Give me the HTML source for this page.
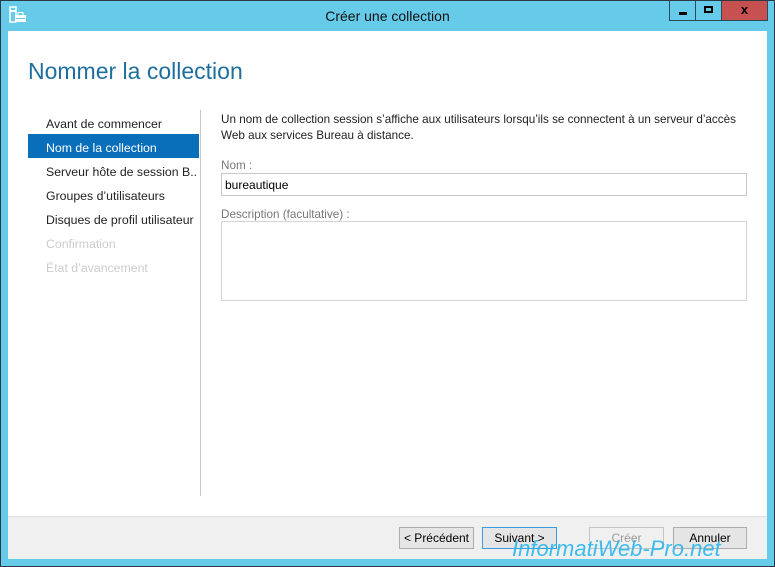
<!DOCTYPE html>
<html><head><style>
*{margin:0;padding:0;box-sizing:border-box}
body{width:775px;height:567px;background:#66cbe9;font-family:"Liberation Sans",sans-serif;position:relative;overflow:hidden;}
.t{position:absolute;white-space:nowrap}
#content{position:absolute;left:8px;top:31px;width:759px;height:528px;background:#fff}
#bottom{position:absolute;left:8px;top:516px;width:759px;height:43px;background:#f0f0f0;border-top:1px solid #dfdfdf}
.btn{position:absolute;top:527px;height:22px;border:1px solid #adadad;background:#e5e5e5;font-size:12px;text-align:center;line-height:21px;color:#000}
.nav{position:absolute;left:46px;font-size:12.3px;color:#222}
</style></head><body>
<div class="t" style="left:0;top:0;width:775px;height:567px;border:1px solid #2a3a44;z-index:5"></div>
<svg class="t" style="left:9px;top:6px" width="18" height="18" viewBox="0 0 18 18"><rect x="1" y="1" width="6" height="15" fill="none" stroke="#fff" stroke-width="1.5"/><rect x="1" y="4" width="6" height="2" fill="#fff"/><rect x="6" y="9" width="11" height="7" fill="#fff"/><rect x="9" y="6.5" width="5" height="3" fill="none" stroke="#fff"/><rect x="7" y="12" width="9" height="1" fill="#66cbe9"/></svg>
<div class="t" style="left:0;width:775px;top:8px;text-align:center;font-size:14px;color:#111">Créer une collection</div>
<div class="t" style="left:669px;top:0;width:27px;height:21px;border:1px solid #2a4a5a;border-top:none"><div style="position:absolute;left:9px;top:12px;width:8px;height:3px;background:#000"></div></div>
<div class="t" style="left:696px;top:0;width:26px;height:21px;border:1px solid #2a4a5a;border-top:none;border-left:none"><div style="position:absolute;left:8px;top:6px;width:9px;height:7px;border:2px solid #000"></div></div>
<div class="t" style="left:722px;top:0;width:46px;height:21px;background:#c75050;border:1px solid #2a4a5a;border-top:none;border-left:none;text-align:center;font-weight:bold;font-size:13px;line-height:20px">x</div>
<div id="content"></div>
<div class="t" style="left:28px;top:58px;font-size:23px;color:#1f6f9e">Nommer la collection</div>
<div class="t" style="left:28px;top:134px;width:171px;height:24px;background:#0a6fba"></div>
<div class="nav t" style="top:117px">Avant de commencer</div>
<div class="nav t" style="top:141px;color:#fff">Nom de la collection</div>
<div class="nav t" style="top:165px;width:152px;overflow:hidden">Serveur hôte de session B...</div>
<div class="nav t" style="top:189px">Groupes d’utilisateurs</div>
<div class="nav t" style="top:213px">Disques de profil utilisateur</div>
<div class="nav t" style="top:237px;color:#ccc">Confirmation</div>
<div class="nav t" style="top:261px;color:#ccc">État d’avancement</div>
<div class="t" style="left:200px;top:110px;width:1px;height:386px;background:#c8c8c8"></div>
<div class="t" style="left:221px;top:112px;font-size:11.7px;line-height:16px;color:#222">Un nom de collection session s’affiche aux utilisateurs lorsqu’ils se connectent à un serveur d’accès<br>Web aux services Bureau à distance.</div>
<div class="t" style="left:221px;top:159px;font-size:11.7px;color:#777">Nom :</div>
<div class="t" style="left:221px;top:173px;width:526px;height:23px;border:1px solid #c8c8c8;font-size:12px;padding:4px 3px;color:#000">bureautique</div>
<div class="t" style="left:221px;top:208px;font-size:11.7px;color:#777">Description (facultative) :</div>
<div class="t" style="left:221px;top:221px;width:526px;height:80px;border:1px solid #d5d5d5"></div>
<div id="bottom"></div>
<div class="btn" style="left:399px;width:75px">&lt; Précédent</div>
<div class="btn" style="left:482px;width:75px;border-color:#3c9be0">Suivant &gt;</div>
<div class="btn" style="left:589px;width:75px;color:#999;background:#f0f0f0;border-color:#c5c5c5">Créer</div>
<div class="btn" style="left:673px;width:74px">Annuler</div>
<div class="t" style="left:512px;top:536px;font-size:22px;font-style:italic;color:#29b6ee;opacity:.9">InformatiWeb-Pro.net</div>
<div class="t" style="left:0;top:559px;width:775px;height:8px;background:#66cbe9"></div>
</body></html>
